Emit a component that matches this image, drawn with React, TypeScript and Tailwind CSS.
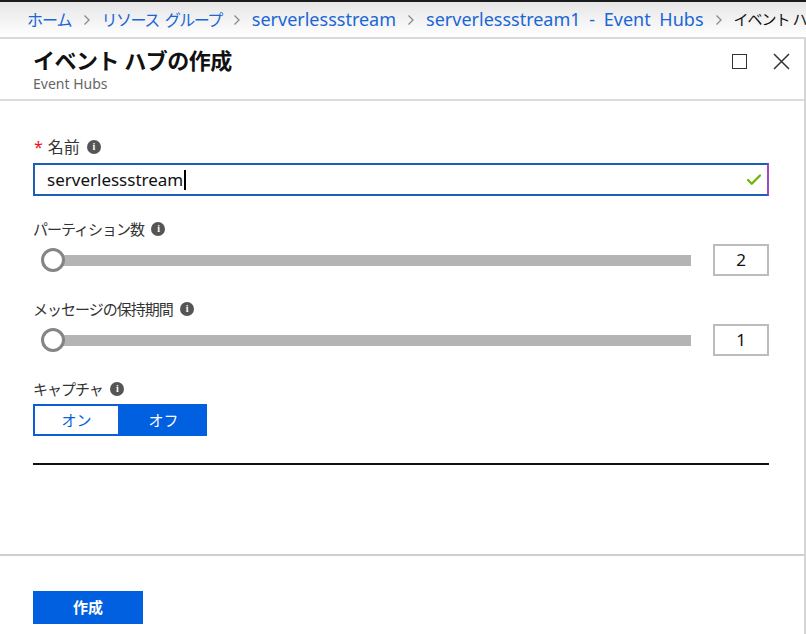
import { Check } from 'lucide-react'

const FONT = "'Noto Sans', 'Noto Sans CJK JP', sans-serif"

function Info() {
  return (
    <span className="inline-flex items-center justify-center w-[14px] h-[14px] rounded-full bg-[#555] text-white text-[10px] font-bold leading-none ml-[7px]" style={{ fontFamily: "'Liberation Serif', serif" }}>
      i
    </span>
  )
}

function Sep() {
  return (
    <svg width="8" height="12" viewBox="0 0 8 12" className="mx-[11px] shrink-0">
      <path d="M1.5 1.5 L6 6 L1.5 10.5" fill="none" stroke="#8a8a8a" strokeWidth="1.3" />
    </svg>
  )
}

function Slider({ value }: { value: string }) {
  return (
    <div className="flex items-center h-[32px]">
      <div className="relative flex-1 h-[32px] flex items-center ml-[9px] mr-[22px]">
        <div className="w-full h-[11px] bg-[#b4b4b4]" />
        <div className="absolute -left-[1px] top-[4px] w-[24px] h-[24px] rounded-full bg-white border-[3px] border-[#858585]" />
      </div>
      <div className="w-[56px] h-[32px] border-2 border-[#bcbcbc] flex items-center justify-center text-[17px] text-[#111]">
        {value}
      </div>
    </div>
  )
}

function Label({ text }: { text: string }) {
  return (
    <div className="flex items-center text-[15px] tracking-[-1px] text-[#333] h-[22px]">
      <span>{text}</span>
      <Info />
    </div>
  )
}

export default function App() {
  return (
    <div className="w-[806px] h-[634px] bg-white overflow-hidden flex flex-col" style={{ fontFamily: FONT }}>
      <div className="h-[2px] bg-[#1b1b1b]" />
      {/* Breadcrumb */}
      <div className="h-[37px] bg-gradient-to-b from-[#e6e6e6] to-white flex items-center pl-[27px] text-[18px] whitespace-nowrap overflow-hidden border-b-2 border-[#d9d9d9]">
        <span className="text-[#1a66d6] text-[16px] tracking-[-1px]">ホーム</span>
        <Sep />
        <span className="text-[#1a66d6] text-[16px] tracking-[-1.5px]">
          リソース<span className="inline-block w-[6px]" />グループ
        </span>
        <Sep />
        <span className="text-[#1a66d6]">serverlessstream</span>
        <Sep />
        <span className="text-[#1a66d6] [word-spacing:4px]">serverlessstream1 - Event Hubs</span>
        <Sep />
        <span className="text-[#111] text-[15px] tracking-[-1px]">イベント ハブ</span>
      </div>

      <div className="flex-1 flex flex-col border-r-2 border-[#d4d4d4]">
        {/* Header */}
        <div className="h-[62px] border-b-2 border-[#dcdcdc] flex items-start justify-between pl-[33px] pr-[14px] pt-[6px]">
          <div>
            <div className="text-[22px] font-bold text-[#111] leading-[30px] tracking-[-0.5px]">イベント ハブの作成</div>
            <div className="text-[14px] text-[#666] leading-[17px]">Event Hubs</div>
          </div>
          <div className="flex items-center gap-[26px] pt-[8px]">
            <div className="w-[15px] h-[15px] border-[1.5px] border-[#333]" />
            <svg width="17" height="17" viewBox="0 0 17 17">
              <path d="M1 1 L16 16 M16 1 L1 16" stroke="#333" strokeWidth="1.5" />
            </svg>
          </div>
        </div>

        {/* Form */}
        <div className="px-[33px] pr-[35px] pt-[35px]">
          <div className="flex items-center text-[16px] text-[#333] h-[22px]">
            <span className="text-[#e81123] mr-[5px] ml-[1px]">*</span>
            <span>名前</span>
            <Info />
          </div>
          <div className="mt-[5px] h-[33px] border-2 border-[#1c5fb5] border-r-[#a844c4] flex items-center justify-between pl-[12px] pr-[4px]">
            <div className="flex items-center text-[17px] text-[#111]">
              serverlessstream<span className="w-[2px] h-[20px] bg-black ml-[1px]" />
            </div>
            <Check size={18} strokeWidth={3} className="text-[#6bb700]" />
          </div>

          <div className="mt-[22px]">
            <Label text="パーティション数" />
          </div>
          <div className="mt-[4px]">
            <Slider value="2" />
          </div>

          <div className="mt-[22px]">
            <Label text="メッセージの保持期間" />
          </div>
          <div className="mt-[4px]">
            <Slider value="1" />
          </div>

          <div className="mt-[22px]">
            <Label text="キャプチャ" />
          </div>
          <div className="mt-[4px] flex h-[32px] w-[174px]">
            <div className="w-[87px] border-2 border-[#0a5fd8] flex items-center justify-center text-[15px] text-[#0a5fd8]">オン</div>
            <div className="w-[87px] bg-[#0060df] flex items-center justify-center text-[15px] text-white">オフ</div>
          </div>

          <div className="mt-[27px] h-[2px] bg-[#111]" />
        </div>

        <div className="flex-1" />
        <div className="h-[2px] bg-[#cfcfcf]" />
        <div className="h-[78px] pl-[33px] pt-[35px]">
          <div className="w-[110px] h-[33px] bg-[#0060df] text-white text-[15px] font-bold flex items-center justify-center">作成</div>
        </div>
      </div>
    </div>
  )
}
